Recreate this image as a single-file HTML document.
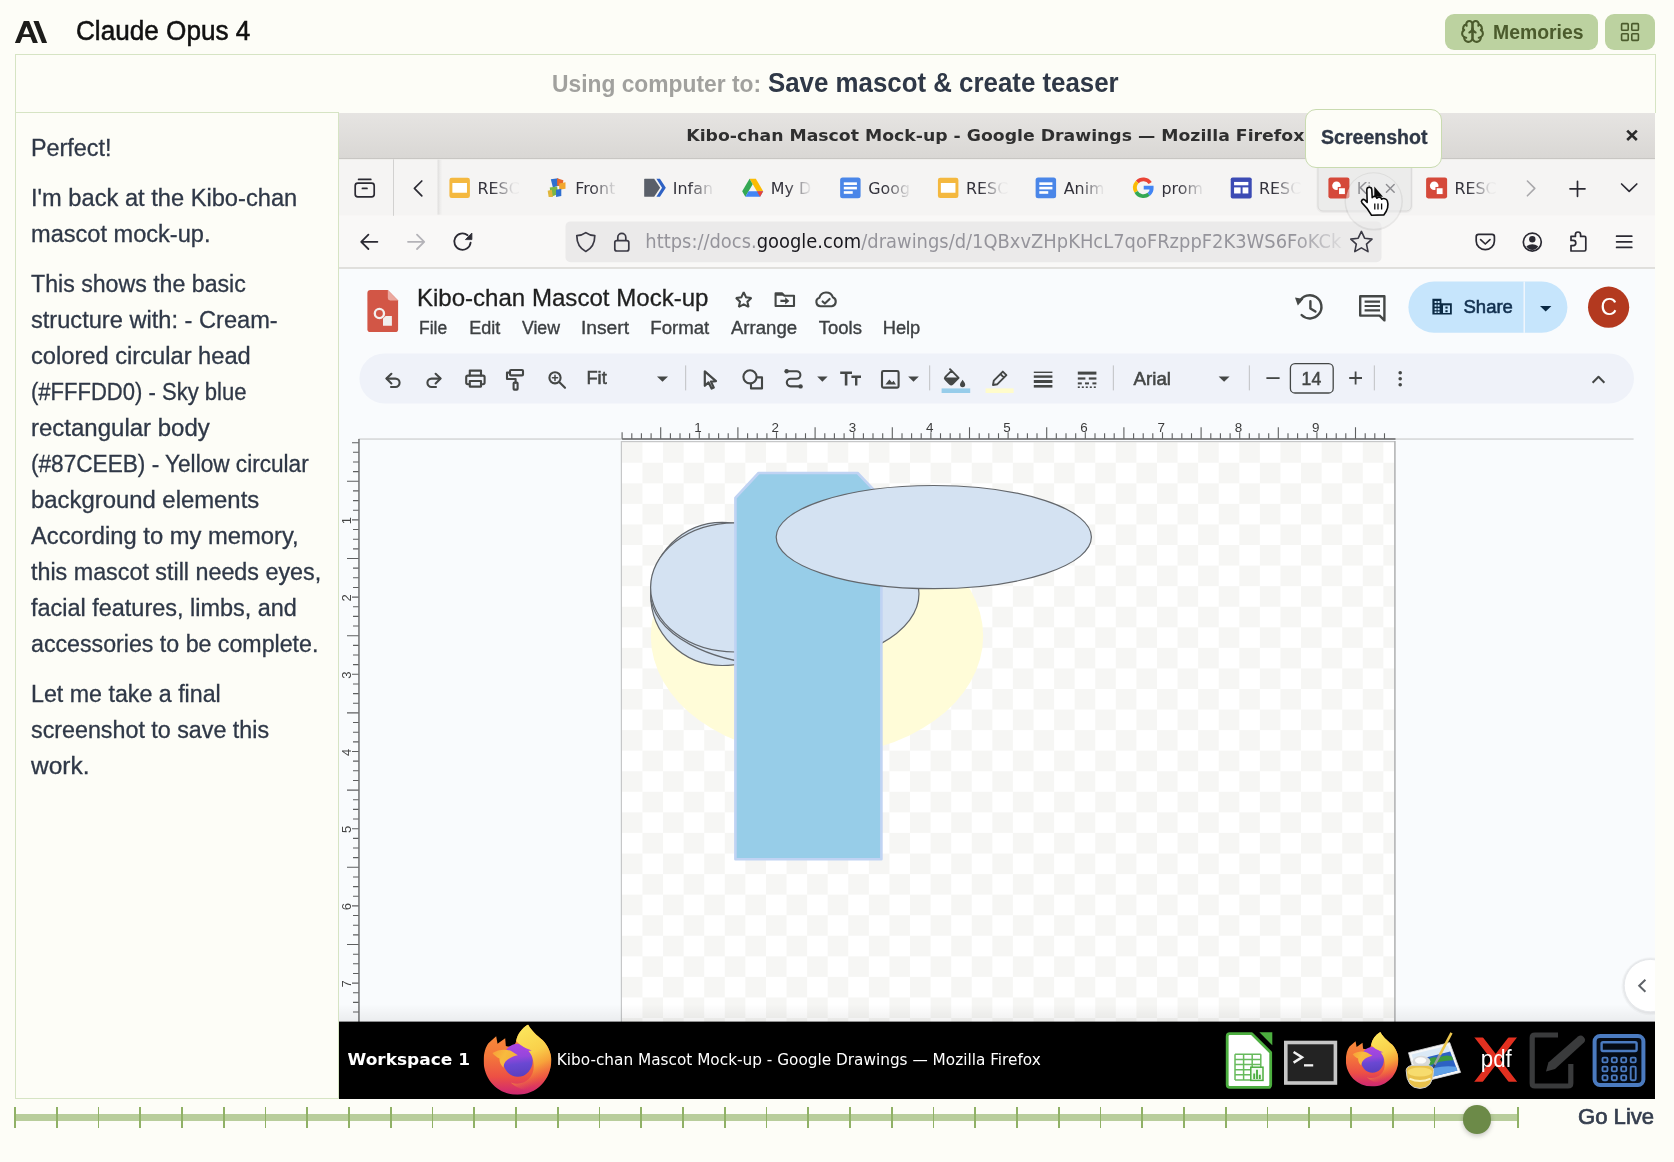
<!DOCTYPE html>
<html lang="en"><head><meta charset="utf-8"><title>Claude Opus 4 - Using computer</title>
<style>
*{margin:0;padding:0;box-sizing:border-box}
html,body{width:1674px;height:1162px;overflow:hidden;background:#fdfdf7}
#app{position:relative;width:1674px;height:1162px;overflow:hidden;background:#fdfdf7;will-change:transform;font-family:"Liberation Sans",sans-serif}
.t{position:absolute;white-space:nowrap;transform-origin:0 50%;display:block}
.b{position:absolute}
svg{position:absolute;display:block;overflow:hidden}
</style></head>
<body><div id="app">
<header>
<svg style="left:14px;top:21px" width="34" height="22" viewBox="-1 0 34 22"><path fill="#1d1d1b" fill-rule="evenodd" d="M-0.1 21.9 L8.8 0.1 L14.1 0.1 L22.9 21.9 L17.9 21.9 L15.45 15.9 L7.45 15.9 L5 21.9 Z M8.2 13.2 L14.7 13.2 L11.45 5.2 Z"/><path fill="#1d1d1b" d="M18.4 0.1 L23.6 0.1 L32.1 21.9 L27 21.9 Z"/></svg>
<span id="t1" class="t" style="left:75.6px;top:14.8px;font:400 27.0px/32px 'Liberation Sans', sans-serif;color:#111;transform:scaleX(0.9678);-webkit-text-stroke:0.55px #111;">Claude Opus 4</span>
<div class="b" style="left:1445.0px;top:14.0px;width:152.5px;height:35.5px;background:#bcd2a0;border-radius:9px"></div>
<svg style="left:1460px;top:18.9px" width="25" height="25" viewBox="0 0 24 24" fill="none" stroke="#4b5b2c" stroke-width="2" stroke-linecap="round" stroke-linejoin="round"><path d="M12 5a3 3 0 1 0-5.997.125 4 4 0 0 0-2.526 5.77 4 4 0 0 0 .556 6.588A4 4 0 1 0 12 18Z"/><path d="M12 5a3 3 0 1 1 5.997.125 4 4 0 0 1 2.526 5.77 4 4 0 0 1-.556 6.588A4 4 0 1 1 12 18Z"/><path d="M15 13a4.5 4.5 0 0 1-3-4 4.5 4.5 0 0 1-3 4"/><path d="M17.599 6.5a3 3 0 0 0 .399-1.375"/><path d="M6.003 5.125A3 3 0 0 0 6.401 6.5"/><path d="M3.477 10.896a4 4 0 0 1 .585-.396"/><path d="M19.938 10.5a4 4 0 0 1 .585.396"/><path d="M6 18a4 4 0 0 1-1.967-.516"/><path d="M19.967 17.484A4 4 0 0 1 18 18"/></svg>
<span id="t2" class="t" style="left:1492.9px;top:19.6px;font:700 19.6px/24px 'Liberation Sans', sans-serif;color:#4b5b2c;transform:scaleX(0.9890);">Memories</span>
<div class="b" style="left:1605.0px;top:14.0px;width:49.8px;height:35.5px;background:#bcd2a0;border-radius:9px"></div>
<svg style="left:1620px;top:22px" width="20" height="20" viewBox="0 0 20 20" fill="none" stroke="#4b5b2c" stroke-width="1.6" stroke-linejoin="round"><rect x="1.6" y="1.6" width="6.6" height="6.6" rx="0.8"/><rect x="11.8" y="1.6" width="6.6" height="6.6" rx="0.8"/><rect x="1.6" y="11.8" width="6.6" height="6.6" rx="0.8"/><rect x="11.8" y="11.8" width="6.6" height="6.6" rx="0.8"/></svg>
</header>
<main>
<div class="b" style="left:15.0px;top:54.0px;width:1641.0px;height:59.0px;border:1px solid #d6e4c4;border-bottom:none"></div>
<div class="b" style="left:15.0px;top:112.0px;width:324.0px;height:987.0px;border:1px solid #d6e4c4;background:#fdfdf7"></div>
<span id="t3" class="t" style="left:551.5px;top:68.6px;font:700 24.0px/29px 'Liberation Sans', sans-serif;color:#a1a19e;transform:scaleX(0.9500);">Using computer to:</span>
<span id="t4" class="t" style="left:767.5px;top:64.7px;font:700 28.5px/34px 'Liberation Sans', sans-serif;color:#2f3847;transform:scaleX(0.9070);">Save mascot &amp; create teaser</span>
<aside>
<p>
<span id="t5" class="t" style="left:30.8px;top:133.6px;font:400 23.0px/28px 'Liberation Sans', sans-serif;color:#2f3847;transform:scaleX(1.0152);-webkit-text-stroke:0.3px #2f3847;">Perfect!</span>
</p>
<p>
<span id="t6" class="t" style="left:30.8px;top:184.4px;font:400 23.0px/28px 'Liberation Sans', sans-serif;color:#2f3847;transform:scaleX(1.0286);-webkit-text-stroke:0.3px #2f3847;">I'm back at the Kibo-chan</span>
<span id="t7" class="t" style="left:30.8px;top:220.4px;font:400 23.0px/28px 'Liberation Sans', sans-serif;color:#2f3847;transform:scaleX(1.0251);-webkit-text-stroke:0.3px #2f3847;">mascot mock-up.</span>
</p>
<p>
<span id="t8" class="t" style="left:30.8px;top:270.4px;font:400 23.0px/28px 'Liberation Sans', sans-serif;color:#2f3847;transform:scaleX(1.0061);-webkit-text-stroke:0.3px #2f3847;">This shows the basic</span>
<span id="t9" class="t" style="left:30.8px;top:306.4px;font:400 23.0px/28px 'Liberation Sans', sans-serif;color:#2f3847;transform:scaleX(1.0267);-webkit-text-stroke:0.3px #2f3847;">structure with: - Cream-</span>
<span id="t10" class="t" style="left:30.8px;top:342.4px;font:400 23.0px/28px 'Liberation Sans', sans-serif;color:#2f3847;transform:scaleX(1.0294);-webkit-text-stroke:0.3px #2f3847;">colored circular head</span>
<span id="t11" class="t" style="left:30.8px;top:378.4px;font:400 23.0px/28px 'Liberation Sans', sans-serif;color:#2f3847;transform:scaleX(0.9578);-webkit-text-stroke:0.3px #2f3847;">(#FFFDD0) - Sky blue</span>
<span id="t12" class="t" style="left:30.8px;top:414.4px;font:400 23.0px/28px 'Liberation Sans', sans-serif;color:#2f3847;transform:scaleX(1.0433);-webkit-text-stroke:0.3px #2f3847;">rectangular body</span>
<span id="t13" class="t" style="left:30.8px;top:450.4px;font:400 23.0px/28px 'Liberation Sans', sans-serif;color:#2f3847;transform:scaleX(0.9830);-webkit-text-stroke:0.3px #2f3847;">(#87CEEB) - Yellow circular</span>
<span id="t14" class="t" style="left:30.8px;top:486.4px;font:400 23.0px/28px 'Liberation Sans', sans-serif;color:#2f3847;transform:scaleX(1.0377);-webkit-text-stroke:0.3px #2f3847;">background elements</span>
<span id="t15" class="t" style="left:30.8px;top:522.4px;font:400 23.0px/28px 'Liberation Sans', sans-serif;color:#2f3847;transform:scaleX(1.0332);-webkit-text-stroke:0.3px #2f3847;">According to my memory,</span>
<span id="t16" class="t" style="left:30.8px;top:558.4px;font:400 23.0px/28px 'Liberation Sans', sans-serif;color:#2f3847;transform:scaleX(1.0133);-webkit-text-stroke:0.3px #2f3847;">this mascot still needs eyes,</span>
<span id="t17" class="t" style="left:30.8px;top:594.4px;font:400 23.0px/28px 'Liberation Sans', sans-serif;color:#2f3847;transform:scaleX(1.0195);-webkit-text-stroke:0.3px #2f3847;">facial features, limbs, and</span>
<span id="t18" class="t" style="left:30.8px;top:630.4px;font:400 23.0px/28px 'Liberation Sans', sans-serif;color:#2f3847;transform:scaleX(1.0081);-webkit-text-stroke:0.3px #2f3847;">accessories to be complete.</span>
</p>
<p>
<span id="t19" class="t" style="left:30.8px;top:680.4px;font:400 23.0px/28px 'Liberation Sans', sans-serif;color:#2f3847;transform:scaleX(1.0096);-webkit-text-stroke:0.3px #2f3847;">Let me take a final</span>
<span id="t20" class="t" style="left:30.8px;top:716.4px;font:400 23.0px/28px 'Liberation Sans', sans-serif;color:#2f3847;transform:scaleX(1.0119);-webkit-text-stroke:0.3px #2f3847;">screenshot to save this</span>
<span id="t21" class="t" style="left:30.8px;top:752.4px;font:400 23.0px/28px 'Liberation Sans', sans-serif;color:#2f3847;transform:scaleX(1.0636);-webkit-text-stroke:0.3px #2f3847;">work.</span>
</p>
</aside>
<svg style="left:339px;top:113px" width="1316" height="986" viewBox="339 113 1316 986">
<defs>
<linearGradient id="gTitle" x1="0" y1="0" x2="0" y2="1"><stop offset="0" stop-color="#e6e4e2"/><stop offset="1" stop-color="#d9d7d4"/></linearGradient>
<linearGradient id="gFade" x1="0" y1="0" x2="1" y2="0"><stop offset="0" stop-color="#fff"/><stop offset="0.45" stop-color="#fff"/><stop offset="1" stop-color="#000"/></linearGradient>
<linearGradient id="gSep" x1="0" y1="0" x2="1" y2="0"><stop offset="0" stop-color="#dddcdb"/><stop offset="1" stop-color="#efeeed" stop-opacity="0.3"/></linearGradient>
<linearGradient id="gShadow" x1="0" y1="0" x2="0" y2="1"><stop offset="0" stop-color="#000" stop-opacity="0"/><stop offset="1" stop-color="#000" stop-opacity="0.06"/></linearGradient>
<pattern id="chk" x="621.9" y="442.2" width="41.16" height="41.13" patternUnits="userSpaceOnUse">
<rect width="41.2" height="41.2" fill="#ffffff"/><rect width="20.58" height="20.565" fill="#f6f6f4"/><rect x="20.58" y="20.565" width="20.6" height="20.6" fill="#f6f6f4"/></pattern>

<linearGradient id="ffBase" x1="0" y1="0" x2="0" y2="1"><stop offset="0" stop-color="#f8923a"/><stop offset="0.45" stop-color="#f4783a"/><stop offset="0.75" stop-color="#ec4f45"/><stop offset="0.93" stop-color="#d63068"/><stop offset="1" stop-color="#c92a72"/></linearGradient>
<linearGradient id="ffFlame" x1="0.3" y1="0" x2="0.6" y2="1"><stop offset="0" stop-color="#fbe85e"/><stop offset="0.45" stop-color="#f9d04a"/><stop offset="0.66" stop-color="#f7a83a" stop-opacity="0.92"/><stop offset="0.82" stop-color="#f58a3a" stop-opacity="0.35"/><stop offset="0.93" stop-color="#f47a3a" stop-opacity="0"/></linearGradient>
<linearGradient id="ffGlobe" x1="0.4" y1="0" x2="0.5" y2="1"><stop offset="0" stop-color="#ab47e2"/><stop offset="0.4" stop-color="#9646dc"/><stop offset="0.62" stop-color="#6a48d2"/><stop offset="1" stop-color="#5a3fc0"/></linearGradient>
<linearGradient id="ffHead" x1="0" y1="0" x2="1" y2="0.4"><stop offset="0" stop-color="#f79d38"/><stop offset="0.5" stop-color="#f8bb3e"/><stop offset="1" stop-color="#f6b03c"/></linearGradient>
<symbol id="ff" viewBox="0 0 100 104">
 <path fill="url(#ffBase)" d="M65.6 0 C72 12 84 20 88 24 C95 32 100 42 100 52 C100 82 78 104 50 104 C22 104 0 82 0 54 C0 42 3 33 7 27.7 L18.5 17.4 L20.5 28.7 L31.8 20.5 L32.8 31.8 C36 33 40 33 44 32 C46 30 47.4 27.6 48 24.6 C50 14 56 6 65.6 0 Z"/>
 <ellipse cx="50.5" cy="53" rx="22" ry="24.4" fill="url(#ffGlobe)"/>
 <path fill="url(#ffFlame)" d="M65.6 0 C72 12 84 20 88 24 C95 32 100 42 100 52 C100 70 92 86 78 95 C66 100 50 96 40 86 C56 92 74 82 74 62 C74 50 70 40 60 34 C56 31.4 52 29 48 24.6 C50 14 56 6 65.6 0 Z"/>
 <path fill="#a746e0" d="M58 33.4 L71 38.4 L62.6 39.6 Z"/>
 <path fill="url(#ffHead)" d="M13 42.4 C21 37 32 36 40 39 L50.6 45.4 C43.6 46.6 37.4 49.6 32.6 54.6 C30.4 57.6 29.4 60.6 29.4 64 C25.4 60 23 55 23.4 50.4 C19.4 48.6 15.6 45.8 13 42.4 Z"/>
</symbol>

</defs>
<rect x="339" y="268.6" width="1316" height="754" fill="#f9fbfd"/>
<path d="M370.6 289.9 H387.8 L398.1 300.4 V329.2 Q398.1 332.1 395.2 332.1 H370.6 Q367.4 332.1 367.4 329.2 V292.8 Q367.4 289.9 370.6 289.9 Z" fill="#d25646"/><path d="M387.8 289.9 L398.1 300.4 H390.2 Q387.8 300.4 387.8 298 Z" fill="#eba79e"/><circle cx="379.4" cy="313.5" r="4.6" fill="none" stroke="#f3efee" stroke-width="2.3"/><path d="M385.6 316 H391.9 V325.7 H383 V318.6 Z" fill="#f1eeed"/>
<text x="416.9" y="305.8" font-family="Liberation Sans, sans-serif" font-size="23.7" font-weight="400" fill="#1f1f1f" text-anchor="start" textLength="291.6" lengthAdjust="spacingAndGlyphs" stroke="#1f1f1f" stroke-width="0.3">Kibo-chan Mascot Mock-up</text>
<path d="M743.7 291.6 L746.4 297.4 L752.4 298.1 L747.9 302.3 L749.2 308.3 L743.7 305.3 L738.2 308.3 L739.5 302.3 L735 298.1 L741 297.4 Z" fill="none" stroke="#444746" stroke-width="2.3" stroke-linejoin="miter" stroke-miterlimit="2" transform="translate(743.7 300) scale(0.88) translate(-743.7 -300.4)"/>
<g fill="none" stroke="#444746" stroke-width="2.1" stroke-linejoin="round"><path d="M775.6 293.4 H782.2 L784.4 295.8 H794 V306 H775.6 Z"/></g><path d="M775.6 293.4 H782.2 L784.4 295.8 H775.6 Z" fill="#444746"/><path d="M780.4 299.8 H785.2 V297.2 L789.4 300.9 L785.2 304.6 V302 H780.4 Z" fill="#444746"/>
<g fill="none" stroke="#444746" stroke-width="2.1" stroke-linejoin="round" stroke-linecap="round"><path d="M820.6 306.2 H831.8 A4.7 4.7 0 0 0 832.8 297.2 A7 7 0 0 0 819.4 297.8 A4.3 4.3 0 0 0 820.6 306.2 Z"/><path d="M822.6 301.4 L824.9 303.6 L829.6 298.9"/></g>
<text x="419.0" y="333.6" font-family="Liberation Sans, sans-serif" font-size="18.0" font-weight="400" fill="#3d4043" text-anchor="start" textLength="28.1" lengthAdjust="spacingAndGlyphs" stroke="#3d4043" stroke-width="0.35">File</text>
<text x="469.2" y="333.6" font-family="Liberation Sans, sans-serif" font-size="18.0" font-weight="400" fill="#3d4043" text-anchor="start" textLength="31.1" lengthAdjust="spacingAndGlyphs" stroke="#3d4043" stroke-width="0.35">Edit</text>
<text x="521.9" y="333.6" font-family="Liberation Sans, sans-serif" font-size="18.0" font-weight="400" fill="#3d4043" text-anchor="start" textLength="38.1" lengthAdjust="spacingAndGlyphs" stroke="#3d4043" stroke-width="0.35">View</text>
<text x="580.9" y="333.6" font-family="Liberation Sans, sans-serif" font-size="18.0" font-weight="400" fill="#3d4043" text-anchor="start" textLength="48.1" lengthAdjust="spacingAndGlyphs" stroke="#3d4043" stroke-width="0.35">Insert</text>
<text x="650.3" y="333.6" font-family="Liberation Sans, sans-serif" font-size="18.0" font-weight="400" fill="#3d4043" text-anchor="start" textLength="59.0" lengthAdjust="spacingAndGlyphs" stroke="#3d4043" stroke-width="0.35">Format</text>
<text x="730.9" y="333.6" font-family="Liberation Sans, sans-serif" font-size="18.0" font-weight="400" fill="#3d4043" text-anchor="start" textLength="66.2" lengthAdjust="spacingAndGlyphs" stroke="#3d4043" stroke-width="0.35">Arrange</text>
<text x="818.7" y="333.6" font-family="Liberation Sans, sans-serif" font-size="18.0" font-weight="400" fill="#3d4043" text-anchor="start" textLength="43.2" lengthAdjust="spacingAndGlyphs" stroke="#3d4043" stroke-width="0.35">Tools</text>
<text x="882.7" y="333.6" font-family="Liberation Sans, sans-serif" font-size="18.0" font-weight="400" fill="#3d4043" text-anchor="start" textLength="37.6" lengthAdjust="spacingAndGlyphs" stroke="#3d4043" stroke-width="0.35">Help</text>
<g fill="none" stroke="#444746" stroke-width="2.4" stroke-linecap="round" stroke-linejoin="round"><path d="M1299.4 301.8 A11.6 11.6 0 1 1 1301.6 315"/><path d="M1310.4 301.2 V308.4 L1315.4 311.6"/></g><path d="M1295 297.4 L1303.4 299 L1297.8 305.6 Z" fill="#444746"/>
<path d="M1360.2 296.2 H1384.4 V320.4 L1379.6 315.6 H1360.2 Z" fill="none" stroke="#444746" stroke-width="2.4" stroke-linejoin="round"/><path d="M1364.6 301.6 H1380 M1364.6 306 H1380 M1364.6 310.4 H1380" stroke="#444746" stroke-width="2.2"/>
<rect x="1408.4" y="281.6" width="159" height="51.2" rx="25.6" fill="#c6e5fc"/>
<rect x="1523.6" y="281.6" width="1.2" height="51.2" fill="#f9fbfd"/>
<g fill="#0b2a44"><path d="M1432.4 298.8 H1441.4 V303.2 H1451.8 V314.6 H1432.4 Z"/></g><g fill="#c6e5fc"><rect x="1434.6" y="301" width="2" height="2"/><rect x="1437.6" y="301" width="2" height="2"/><rect x="1434.6" y="304.6" width="2" height="2"/><rect x="1437.6" y="304.6" width="2" height="2"/><rect x="1434.6" y="308.2" width="2" height="2"/><rect x="1437.6" y="308.2" width="2" height="2"/><rect x="1434.6" y="311.4" width="2" height="1.6"/><rect x="1437.6" y="311.4" width="2" height="1.6"/><rect x="1443" y="305.4" width="7" height="7.6"/></g><g fill="#0b2a44"><rect x="1445.4" y="306.6" width="2.2" height="2"/><rect x="1445.4" y="310.2" width="2.2" height="2"/></g>
<text x="1463.5" y="313.4" font-family="Liberation Sans, sans-serif" font-size="18.8" font-weight="400" fill="#12304f" text-anchor="start" textLength="49.4" lengthAdjust="spacingAndGlyphs" stroke="#12304f" stroke-width="0.6">Share</text>
<path d="M1540 306 H1551.4 L1545.7 311.6 Z" fill="#0b2a44"/>
<circle cx="1608.6" cy="307.2" r="20.6" fill="#b3391f"/>
<text x="1608.8" y="315.4" font-family="Liberation Sans, sans-serif" font-size="23.0" font-weight="400" fill="#fff" text-anchor="middle" >C</text>
<rect x="359.4" y="353.4" width="1274.6" height="50" rx="25" fill="#eff2f9"/>
<g fill="none" stroke="#444746" stroke-width="2.1" stroke-linecap="round" stroke-linejoin="round"><path d="M391.4 373.8 L386.4 378.6 L391.4 383.4"/><path d="M386.8 378.6 H395.4 A4.2 4.2 0 0 1 395.4 387 H391"/></g>
<g fill="none" stroke="#444746" stroke-width="2.1" stroke-linecap="round" stroke-linejoin="round"><path d="M435.6 373.8 L440.6 378.6 L435.6 383.4"/><path d="M440.2 378.6 H431.6 A4.2 4.2 0 0 0 431.6 387 H436"/></g>
<g fill="none" stroke="#444746" stroke-width="2.1" stroke-linecap="round" stroke-linejoin="round"><path d="M469.8 375.6 V370.6 H481 V375.6"/><rect x="466.2" y="375.6" width="18.4" height="8.6" rx="1.6"/><rect x="469.8" y="381" width="11.2" height="5.6" fill="#edf2fa"/></g>
<g fill="none" stroke="#444746" stroke-width="2.1" stroke-linecap="round" stroke-linejoin="round"><rect x="510" y="370" width="13" height="5.4" rx="1"/><path d="M510 372.6 H507 V379 H515.6 V382.6"/><rect x="513.6" y="382.6" width="4" height="7" rx="0.8"/></g>
<g fill="none" stroke="#444746" stroke-width="2.1" stroke-linecap="round" stroke-linejoin="round"><circle cx="555" cy="377.8" r="5.6"/><path d="M559.2 382 L565 387.8"/><path d="M552.4 377.8 H557.6 M555 375.2 V380.4" stroke-width="1.5"/></g>
<text x="586.4" y="384.0" font-family="Liberation Sans, sans-serif" font-size="18.0" font-weight="400" fill="#444746" text-anchor="start" textLength="20.4" lengthAdjust="spacingAndGlyphs" stroke="#444746" stroke-width="0.55">Fit</text>
<path d="M657.0 376.4 H668.0 L662.5 381.8 Z" fill="#444746"/>
<rect x="685" y="365.4" width="1.2" height="25" fill="#c7c9cc"/>
<path d="M704.8 371.4 L704.8 385.8 L708.6 382.4 L711.6 388.6 L713.8 387.6 L711 381.6 L716 381.2 Z" fill="none" stroke="#444746" stroke-width="2.2" stroke-linejoin="round"/>
<g fill="none" stroke="#444746" stroke-width="2.1" stroke-linecap="round" stroke-linejoin="round"><circle cx="750" cy="376.8" r="6.6"/><path d="M757.6 377.4 H762 V388.4 H751 V384.4"/></g>
<g fill="none" stroke="#444746" stroke-width="2.1" stroke-linecap="round" stroke-linejoin="round" stroke-width="2.2"><path d="M788.4 371.2 H796.6 A3.8 3.8 0 0 1 796.6 378.8 H790.6 A3.8 3.8 0 0 0 790.6 386.4 H798.8"/></g><circle cx="786.6" cy="371.2" r="2.2" fill="#444746"/><circle cx="800.6" cy="386.4" r="2.2" fill="#444746"/>
<path d="M817.2 376.4 H827.6 L822.4 381.8 Z" fill="#444746"/>
<path d="M840.2 371.4 H852 V374 H847.4 V385.4 H844.8 V374 H840.2 Z M851.4 375.6 H861 V378 H857.4 V385.4 H855 V378 H851.4 Z" fill="#444746"/>
<g fill="none" stroke="#444746" stroke-width="2.1" stroke-linecap="round" stroke-linejoin="round"><rect x="882" y="371" width="16.6" height="16.6" rx="1.4"/></g><path d="M885.4 384.4 L889.4 379.4 L892 382.6 L893.6 380.8 L896 384.4 Z" fill="#444746"/>
<path d="M908.2 376.4 H918.8 L913.5 381.8 Z" fill="#444746"/>
<rect x="929" y="365.4" width="1.2" height="25" fill="#c7c9cc"/>
<path d="M950 369.2 L958.6 377.8 L952.6 383.8 Q951.2 385 949.8 383.8 L945.4 379.4 Q944.2 378 945.4 376.8 L951.4 370.8 M946 378.4 H957.4" fill="none" stroke="#444746" stroke-width="1.9" stroke-linejoin="round" stroke-linecap="round"/><path d="M949 378.6 H957.4 L952.4 383.6 Q951.2 384.6 950 383.6 L946 379.6 Z" fill="#444746"/><path d="M962.6 379.8 Q965.2 383.2 965.2 384.6 A2.6 2.6 0 0 1 960 384.6 Q960 383.2 962.6 379.8 Z" fill="#444746"/>
<rect x="941.6" y="388.4" width="28.6" height="4.6" fill="#97cdea"/>
<path d="M993 385 L993.8 380.6 L1002.8 371.6 L1006.4 375.2 L997.4 384.2 Z M1000.4 374 L1004 377.6" fill="none" stroke="#444746" stroke-width="1.9" stroke-linejoin="round"/>
<rect x="985.6" y="388.4" width="28" height="4.6" fill="#fffccb"/>
<g fill="#444746"><rect x="1033.8" y="371.6" width="18.6" height="1.4"/><rect x="1033.8" y="375.4" width="18.6" height="2.4"/><rect x="1033.8" y="380" width="18.6" height="3"/><rect x="1033.8" y="385" width="18.6" height="2.6"/></g>
<g fill="#444746"><rect x="1077.8" y="371.6" width="18.6" height="3"/><rect x="1077.8" y="377.4" width="7.6" height="2.2"/><rect x="1088.8" y="377.4" width="7.6" height="2.2"/><rect x="1077.8" y="382.4" width="4" height="2"/><rect x="1085" y="382.4" width="4" height="2"/><rect x="1092.4" y="382.4" width="4" height="2"/><rect x="1077.8" y="386.4" width="2" height="1.6"/><rect x="1081.8" y="386.4" width="2" height="1.6"/><rect x="1085.8" y="386.4" width="2" height="1.6"/><rect x="1089.8" y="386.4" width="2" height="1.6"/><rect x="1093.8" y="386.4" width="2" height="1.6"/></g>
<rect x="1112.8" y="365.4" width="1.2" height="25" fill="#c7c9cc"/>
<text x="1133.6" y="384.8" font-family="Liberation Sans, sans-serif" font-size="18.0" font-weight="400" fill="#444746" text-anchor="start" textLength="37.4" lengthAdjust="spacingAndGlyphs" stroke="#444746" stroke-width="0.55">Arial</text>
<path d="M1218.6 376.4 H1229.6 L1224.1 381.8 Z" fill="#444746"/>
<rect x="1248.8" y="365.4" width="1.2" height="25" fill="#c7c9cc"/>
<rect x="1266.4" y="377.2" width="13.2" height="1.8" fill="#444746"/>
<rect x="1290.4" y="363.6" width="42.8" height="29.4" rx="4.6" fill="none" stroke="#444746" stroke-width="1.3"/>
<text x="1311.4" y="384.6" font-family="Liberation Sans, sans-serif" font-size="17.6" font-weight="400" fill="#444746" text-anchor="middle" stroke="#444746" stroke-width="0.5">14</text>
<path d="M1349.2 378 H1362 M1355.6 371.6 V384.4" stroke="#444746" stroke-width="1.8"/>
<rect x="1373.8" y="365.4" width="1.2" height="25" fill="#c7c9cc"/>
<g fill="#444746"><circle cx="1400.2" cy="372.8" r="1.8"/><circle cx="1400.2" cy="378.8" r="1.8"/><circle cx="1400.2" cy="384.8" r="1.8"/></g>
<path d="M1592.6 382.8 L1598.5 376.8 L1604.4 382.8" fill="none" stroke="#444746" stroke-width="2" stroke-linejoin="round"/>
<rect x="358.6" y="438.4" width="1275" height="1.3" fill="#cfd0d1"/>
<rect x="622.1" y="438.2" width="773.4" height="1.6" fill="#707172"/>
<path d="M622.1 438.8 V432.2 M631.8 438.8 V433.2 M641.4 438.8 V433.2 M651.1 438.8 V433.2 M660.7 438.8 V427.2 M670.4 438.8 V433.2 M680.0 438.8 V433.2 M689.6 438.8 V433.2 M699.3 438.8 V432.2 M709.0 438.8 V433.2 M718.6 438.8 V433.2 M728.2 438.8 V433.2 M737.9 438.8 V427.2 M747.6 438.8 V433.2 M757.2 438.8 V433.2 M766.9 438.8 V433.2 M776.5 438.8 V432.2 M786.2 438.8 V433.2 M795.8 438.8 V433.2 M805.5 438.8 V433.2 M815.1 438.8 V427.2 M824.8 438.8 V433.2 M834.4 438.8 V433.2 M844.1 438.8 V433.2 M853.7 438.8 V432.2 M863.4 438.8 V433.2 M873.0 438.8 V433.2 M882.7 438.8 V433.2 M892.3 438.8 V427.2 M902.0 438.8 V433.2 M911.6 438.8 V433.2 M921.2 438.8 V433.2 M930.9 438.8 V432.2 M940.5 438.8 V433.2 M950.2 438.8 V433.2 M959.9 438.8 V433.2 M969.5 438.8 V427.2 M979.2 438.8 V433.2 M988.8 438.8 V433.2 M998.5 438.8 V433.2 M1008.1 438.8 V432.2 M1017.8 438.8 V433.2 M1027.4 438.8 V433.2 M1037.0 438.8 V433.2 M1046.7 438.8 V427.2 M1056.3 438.8 V433.2 M1066.0 438.8 V433.2 M1075.7 438.8 V433.2 M1085.3 438.8 V432.2 M1095.0 438.8 V433.2 M1104.6 438.8 V433.2 M1114.2 438.8 V433.2 M1123.9 438.8 V427.2 M1133.6 438.8 V433.2 M1143.2 438.8 V433.2 M1152.8 438.8 V433.2 M1162.5 438.8 V432.2 M1172.2 438.8 V433.2 M1181.8 438.8 V433.2 M1191.5 438.8 V433.2 M1201.1 438.8 V427.2 M1210.8 438.8 V433.2 M1220.4 438.8 V433.2 M1230.1 438.8 V433.2 M1239.7 438.8 V432.2 M1249.3 438.8 V433.2 M1259.0 438.8 V433.2 M1268.7 438.8 V433.2 M1278.3 438.8 V427.2 M1288.0 438.8 V433.2 M1297.6 438.8 V433.2 M1307.2 438.8 V433.2 M1316.9 438.8 V432.2 M1326.6 438.8 V433.2 M1336.2 438.8 V433.2 M1345.8 438.8 V433.2 M1355.5 438.8 V427.2 M1365.2 438.8 V433.2 M1374.8 438.8 V433.2 M1384.5 438.8 V433.2 " stroke="#5e5f60" stroke-width="1.1" fill="none"/>
<text x="698.1" y="431.5" font-family="Liberation Sans, sans-serif" font-size="13.4" font-weight="400" fill="#3c3c3c" text-anchor="middle" >1</text>
<text x="775.3" y="431.5" font-family="Liberation Sans, sans-serif" font-size="13.4" font-weight="400" fill="#3c3c3c" text-anchor="middle" >2</text>
<text x="852.5" y="431.5" font-family="Liberation Sans, sans-serif" font-size="13.4" font-weight="400" fill="#3c3c3c" text-anchor="middle" >3</text>
<text x="929.7" y="431.5" font-family="Liberation Sans, sans-serif" font-size="13.4" font-weight="400" fill="#3c3c3c" text-anchor="middle" >4</text>
<text x="1006.9" y="431.5" font-family="Liberation Sans, sans-serif" font-size="13.4" font-weight="400" fill="#3c3c3c" text-anchor="middle" >5</text>
<text x="1084.1" y="431.5" font-family="Liberation Sans, sans-serif" font-size="13.4" font-weight="400" fill="#3c3c3c" text-anchor="middle" >6</text>
<text x="1161.3" y="431.5" font-family="Liberation Sans, sans-serif" font-size="13.4" font-weight="400" fill="#3c3c3c" text-anchor="middle" >7</text>
<text x="1238.5" y="431.5" font-family="Liberation Sans, sans-serif" font-size="13.4" font-weight="400" fill="#3c3c3c" text-anchor="middle" >8</text>
<text x="1315.7" y="431.5" font-family="Liberation Sans, sans-serif" font-size="13.4" font-weight="400" fill="#3c3c3c" text-anchor="middle" >9</text>
<rect x="358.2" y="439" width="1.5" height="583" fill="#707172"/>
<path d="M358.6 442.7 H352.0 M358.6 452.3 H353.0 M358.6 462.0 H353.0 M358.6 471.6 H353.0 M358.6 481.3 H347.0 M358.6 490.9 H353.0 M358.6 500.6 H353.0 M358.6 510.2 H353.0 M358.6 519.9 H352.0 M358.6 529.5 H353.0 M358.6 539.2 H353.0 M358.6 548.9 H353.0 M358.6 558.5 H347.0 M358.6 568.1 H353.0 M358.6 577.8 H353.0 M358.6 587.5 H353.0 M358.6 597.1 H352.0 M358.6 606.8 H353.0 M358.6 616.4 H353.0 M358.6 626.0 H353.0 M358.6 635.7 H347.0 M358.6 645.4 H353.0 M358.6 655.0 H353.0 M358.6 664.6 H353.0 M358.6 674.3 H352.0 M358.6 684.0 H353.0 M358.6 693.6 H353.0 M358.6 703.2 H353.0 M358.6 712.9 H347.0 M358.6 722.5 H353.0 M358.6 732.2 H353.0 M358.6 741.9 H353.0 M358.6 751.5 H352.0 M358.6 761.1 H353.0 M358.6 770.8 H353.0 M358.6 780.5 H353.0 M358.6 790.1 H347.0 M358.6 799.8 H353.0 M358.6 809.4 H353.0 M358.6 819.0 H353.0 M358.6 828.7 H352.0 M358.6 838.4 H353.0 M358.6 848.0 H353.0 M358.6 857.6 H353.0 M358.6 867.3 H347.0 M358.6 877.0 H353.0 M358.6 886.6 H353.0 M358.6 896.2 H353.0 M358.6 905.9 H352.0 M358.6 915.5 H353.0 M358.6 925.2 H353.0 M358.6 934.9 H353.0 M358.6 944.5 H347.0 M358.6 954.2 H353.0 M358.6 963.8 H353.0 M358.6 973.5 H353.0 M358.6 983.1 H352.0 M358.6 992.8 H353.0 M358.6 1002.4 H353.0 M358.6 1012.0 H353.0 " stroke="#5e5f60" stroke-width="1.1" fill="none"/>
<text transform="translate(351.0 520.7) rotate(-90)" font-family="Liberation Sans, sans-serif" font-size="13" fill="#444" text-anchor="middle">1</text>
<text transform="translate(351.0 597.9) rotate(-90)" font-family="Liberation Sans, sans-serif" font-size="13" fill="#444" text-anchor="middle">2</text>
<text transform="translate(351.0 675.1) rotate(-90)" font-family="Liberation Sans, sans-serif" font-size="13" fill="#444" text-anchor="middle">3</text>
<text transform="translate(351.0 752.3) rotate(-90)" font-family="Liberation Sans, sans-serif" font-size="13" fill="#444" text-anchor="middle">4</text>
<text transform="translate(351.0 829.5) rotate(-90)" font-family="Liberation Sans, sans-serif" font-size="13" fill="#444" text-anchor="middle">5</text>
<text transform="translate(351.0 906.7) rotate(-90)" font-family="Liberation Sans, sans-serif" font-size="13" fill="#444" text-anchor="middle">6</text>
<text transform="translate(351.0 983.9) rotate(-90)" font-family="Liberation Sans, sans-serif" font-size="13" fill="#444" text-anchor="middle">7</text>
<rect x="621.4" y="441.6" width="773.6" height="581" fill="url(#chk)" stroke="#c6c7c8" stroke-width="1.2"/><rect x="1394.3" y="441" width="1.1" height="581" fill="#adaeaf"/>
<ellipse cx="817" cy="636" rx="166.2" ry="119.6" fill="#fffcd8"/>
<ellipse cx="722.2" cy="593.9" rx="71.6" ry="71.6" fill="#d4e2f2" stroke="#63676c" stroke-width="1.2"/>
<ellipse cx="784.8" cy="593.8" rx="134.2" ry="71.5" fill="#d4e2f2" stroke="#63676c" stroke-width="1.2"/>
<ellipse cx="735" cy="587.4" rx="84.4" ry="64.6" fill="#d4e2f2" stroke="#63676c" stroke-width="1.2"/>
<path d="M758.6 473 H857.6 L881.4 497.8 V859.2 H735.4 V497.8 Z" fill="#97cde8" stroke="#c0d3f3" stroke-width="2.6" stroke-linejoin="round"/>
<ellipse cx="933.8" cy="537.1" rx="157.6" ry="51.6" fill="#d4e2f2" stroke="#63676c" stroke-width="1.2"/>
<rect x="339" y="1004" width="1316" height="18" fill="url(#gShadow)"/>
<circle cx="1650.4" cy="986.2" r="29" fill="#3c4043" fill-opacity="0.035"/><circle cx="1650.4" cy="986" r="27.8" fill="#3c4043" fill-opacity="0.05"/><circle cx="1650.4" cy="985.6" r="26.2" fill="#fff" stroke="#e6e8eb" stroke-width="1"/><path d="M1645.4 979.8 L1639.2 985.8 L1645.4 991.8" fill="none" stroke="#5f6368" stroke-width="2" stroke-linejoin="miter"/>
<rect x="339" y="113" width="1316" height="46" fill="url(#gTitle)"/>
<rect x="339" y="158.4" width="1316" height="1" fill="#bdbbb8"/>
<text x="686.3" y="141.4" font-family="DejaVu Sans, Liberation Sans, sans-serif" font-size="15.4" font-weight="700" fill="#2f2f2f" text-anchor="start" textLength="618.0" lengthAdjust="spacingAndGlyphs" >Kibo-chan Mascot Mock-up - Google Drawings — Mozilla Firefox</text>
<path d="M1627.2 130.6 L1636.8 140 M1636.8 130.6 L1627.2 140" stroke="#2a2a2a" stroke-width="2.6" stroke-linecap="butt"/>
<rect x="339" y="159.3" width="1316" height="56.5" fill="#f5f4f3"/>
<rect x="339" y="215.6" width="1316" height="52" fill="#f9f8f7"/>
<rect x="339" y="267.4" width="1316" height="1.2" fill="#cfcecb"/>
<g fill="none" stroke="#2b2a33" stroke-width="1.7" stroke-linecap="round" stroke-linejoin="round"><rect x="355.2" y="183.2" width="19" height="13.6" rx="2.6"/><path d="M358.6 179.4 H370.8"/><path d="M362.4 188.4 H367"/></g>
<rect x="393" y="159.3" width="1" height="56.5" fill="#d2d1d0"/>
<rect x="437.6" y="159.6" width="4.4" height="55" fill="url(#gSep)"/>
<path d="M421.8 181 L414.4 188.4 L421.8 195.8" fill="none" stroke="#2b2a33" stroke-width="1.7" stroke-linecap="round" stroke-linejoin="round"/>
<rect x="1316.4" y="161" width="96.4" height="52" rx="6.5" fill="#000" fill-opacity="0.035"/><rect x="1318" y="162" width="93.3" height="49" rx="5" fill="#ececeb" stroke="#d9d8d7" stroke-width="1"/>
<g transform="translate(448.9 177.1) scale(1.05)"><rect x="0.5" y="0.5" width="19.5" height="19.5" rx="2.2" fill="#f4b83f"/><rect x="3.3" y="5.6" width="13.9" height="9.3" fill="#fff"/></g>
<text x="477.5" y="194.1" font-family="DejaVu Sans, Liberation Sans, sans-serif" font-size="15.9" fill="url(#tf0)">RESC</text>
<linearGradient id="tf0" gradientUnits="userSpaceOnUse" x1="477.5" y1="0" x2="513.5" y2="0"><stop offset="0" stop-color="#33323b"/><stop offset="0.4" stop-color="#33323b"/><stop offset="1" stop-color="#33323b" stop-opacity="0.05"/></linearGradient>
<g transform="translate(546.6 177.1) scale(1.05)"><path d="M4 2 L11 1 L12 8 L6 10 Z" fill="#2f6fd0"/><path d="M10 1 L16 3 L15 9 L10 8 Z" fill="#e8662a"/><path d="M12 6 L18 5 L18 11 L12 12 Z" fill="#f2a72e"/><path d="M3 10 L10 9 L11 16 L4 19 Z" fill="#7ab648"/><path d="M9 12 L14 11 L14 18 L9 19 Z" fill="#2f6fd0"/><path d="M1 13 L5 12 L6 19 L2 19 Z" fill="#e0b63a"/></g>
<text x="575.2" y="194.1" font-family="DejaVu Sans, Liberation Sans, sans-serif" font-size="15.9" fill="url(#tf1)">Front</text>
<linearGradient id="tf1" gradientUnits="userSpaceOnUse" x1="575.2" y1="0" x2="616.2" y2="0"><stop offset="0" stop-color="#33323b"/><stop offset="0.4" stop-color="#33323b"/><stop offset="1" stop-color="#33323b" stop-opacity="0.05"/></linearGradient>
<g transform="translate(644.2 177.1) scale(1.05)"><path d="M0.5 1.6 L9.5 1.6 L15.2 10.2 L9.5 18.8 L0.5 18.8 Q0 18.8 0 18 L0 2.4 Q0 1.6 0.5 1.6 Z" fill="#5a5f69"/><path d="M11.6 1.6 L15 1.6 L20.6 10.2 L15 18.8 L11.6 18.8 L17 10.2 Z" fill="#2f62c4"/></g>
<text x="672.8" y="194.1" font-family="DejaVu Sans, Liberation Sans, sans-serif" font-size="15.9" fill="url(#tf2)">Infan</text>
<linearGradient id="tf2" gradientUnits="userSpaceOnUse" x1="672.8" y1="0" x2="713.8" y2="0"><stop offset="0" stop-color="#33323b"/><stop offset="0.4" stop-color="#33323b"/><stop offset="1" stop-color="#33323b" stop-opacity="0.05"/></linearGradient>
<g transform="translate(742.2 177.1) scale(1.05)"><path d="M7 1.5 L13 1.5 L20 13.5 L14 13.5 Z" fill="#fbbc04"/><path d="M7 1.5 L0 13.5 L3 18.8 L10 6.7 Z" fill="#34a853"/><path d="M3 18.8 L17 18.8 L20 13.5 L6 13.5 Z" fill="#4285f4"/><path d="M14 13.5 L20 13.5 L17 18.8 Z" fill="#ea4335"/></g>
<text x="770.8" y="194.1" font-family="DejaVu Sans, Liberation Sans, sans-serif" font-size="15.9" fill="url(#tf3)">My D</text>
<linearGradient id="tf3" gradientUnits="userSpaceOnUse" x1="770.8" y1="0" x2="810.8" y2="0"><stop offset="0" stop-color="#33323b"/><stop offset="0.4" stop-color="#33323b"/><stop offset="1" stop-color="#33323b" stop-opacity="0.05"/></linearGradient>
<g transform="translate(839.6 177.1) scale(1.05)"><rect x="0.5" y="0.3" width="19.5" height="19.8" rx="2.4" fill="#4a86e8"/><rect x="4" y="5" width="12.5" height="2.5" fill="#fff"/><rect x="4" y="9.2" width="12.5" height="2.5" fill="#fff"/><rect x="4" y="13.4" width="8.5" height="2.5" fill="#fff"/></g>
<text x="868.2" y="194.1" font-family="DejaVu Sans, Liberation Sans, sans-serif" font-size="15.9" fill="url(#tf4)">Goog</text>
<linearGradient id="tf4" gradientUnits="userSpaceOnUse" x1="868.2" y1="0" x2="910.2" y2="0"><stop offset="0" stop-color="#33323b"/><stop offset="0.4" stop-color="#33323b"/><stop offset="1" stop-color="#33323b" stop-opacity="0.05"/></linearGradient>
<g transform="translate(937.4 177.1) scale(1.05)"><rect x="0.5" y="0.5" width="19.5" height="19.5" rx="2.2" fill="#f4b83f"/><rect x="3.3" y="5.6" width="13.9" height="9.3" fill="#fff"/></g>
<text x="966.0" y="194.1" font-family="DejaVu Sans, Liberation Sans, sans-serif" font-size="15.9" fill="url(#tf5)">RESC</text>
<linearGradient id="tf5" gradientUnits="userSpaceOnUse" x1="966.0" y1="0" x2="1002.0" y2="0"><stop offset="0" stop-color="#33323b"/><stop offset="0.4" stop-color="#33323b"/><stop offset="1" stop-color="#33323b" stop-opacity="0.05"/></linearGradient>
<g transform="translate(1035.1 177.1) scale(1.05)"><rect x="0.5" y="0.3" width="19.5" height="19.8" rx="2.4" fill="#4a86e8"/><rect x="4" y="5" width="12.5" height="2.5" fill="#fff"/><rect x="4" y="9.2" width="12.5" height="2.5" fill="#fff"/><rect x="4" y="13.4" width="8.5" height="2.5" fill="#fff"/></g>
<text x="1063.7" y="194.1" font-family="DejaVu Sans, Liberation Sans, sans-serif" font-size="15.9" fill="url(#tf6)">Anim</text>
<linearGradient id="tf6" gradientUnits="userSpaceOnUse" x1="1063.7" y1="0" x2="1103.7" y2="0"><stop offset="0" stop-color="#33323b"/><stop offset="0.4" stop-color="#33323b"/><stop offset="1" stop-color="#33323b" stop-opacity="0.05"/></linearGradient>
<g transform="translate(1132.8 177.1) scale(1.05)" fill="none" stroke-width="3.6"><path d="M16.6 5.6 A8 8 0 0 0 4.2 4.6" stroke="#ea4335"/><path d="M4.2 4.6 A8 8 0 0 0 3.2 14" stroke="#fbbc04"/><path d="M3.2 14 A8 8 0 0 0 15.2 16.4" stroke="#34a853"/><path d="M15.2 16.4 A8 8 0 0 0 18 10 L10.4 10" stroke="#4285f4"/></g>
<text x="1161.4" y="194.1" font-family="DejaVu Sans, Liberation Sans, sans-serif" font-size="15.9" fill="url(#tf7)">prom</text>
<linearGradient id="tf7" gradientUnits="userSpaceOnUse" x1="1161.4" y1="0" x2="1203.4" y2="0"><stop offset="0" stop-color="#33323b"/><stop offset="0.4" stop-color="#33323b"/><stop offset="1" stop-color="#33323b" stop-opacity="0.05"/></linearGradient>
<g transform="translate(1230.4 177.1) scale(1.05)"><rect x="0.3" y="0.3" width="20" height="20" rx="1.8" fill="#3c4bb4"/><rect x="3.5" y="4.6" width="13.6" height="3.2" fill="#fff"/><rect x="3.5" y="9.8" width="6.2" height="5.8" fill="#fff"/><rect x="11.6" y="9.8" width="5.5" height="5.8" fill="#fff"/></g>
<text x="1259.0" y="194.1" font-family="DejaVu Sans, Liberation Sans, sans-serif" font-size="15.9" fill="url(#tf8)">RESC</text>
<linearGradient id="tf8" gradientUnits="userSpaceOnUse" x1="1259.0" y1="0" x2="1295.0" y2="0"><stop offset="0" stop-color="#33323b"/><stop offset="0.4" stop-color="#33323b"/><stop offset="1" stop-color="#33323b" stop-opacity="0.05"/></linearGradient>
<g transform="translate(1328.1 177.1) scale(1.05)"><rect x="0.3" y="0.3" width="20" height="20" rx="2" fill="#d5493a"/><circle cx="8" cy="8.2" r="4.1" fill="#fff"/><rect x="9.8" y="10" width="6.8" height="6.8" fill="#fff" stroke="#d5493a" stroke-width="1.2"/></g>
<text x="1356.7" y="194.1" font-family="DejaVu Sans, Liberation Sans, sans-serif" font-size="15.9" fill="url(#tf9)">Ki</text>
<linearGradient id="tf9" gradientUnits="userSpaceOnUse" x1="1356.7" y1="0" x2="1378.7" y2="0"><stop offset="0" stop-color="#33323b"/><stop offset="0.4" stop-color="#33323b"/><stop offset="1" stop-color="#33323b" stop-opacity="0.05"/></linearGradient>
<g transform="translate(1425.8 177.1) scale(1.05)"><rect x="0.3" y="0.3" width="20" height="20" rx="2" fill="#d5493a"/><circle cx="8" cy="8.2" r="4.1" fill="#fff"/><rect x="9.8" y="10" width="6.8" height="6.8" fill="#fff" stroke="#d5493a" stroke-width="1.2"/></g>
<text x="1454.4" y="194.1" font-family="DejaVu Sans, Liberation Sans, sans-serif" font-size="15.9" fill="url(#tf10)">RESC</text>
<linearGradient id="tf10" gradientUnits="userSpaceOnUse" x1="1454.4" y1="0" x2="1490.4" y2="0"><stop offset="0" stop-color="#33323b"/><stop offset="0.4" stop-color="#33323b"/><stop offset="1" stop-color="#33323b" stop-opacity="0.05"/></linearGradient>
<path d="M1386.4 184.4 L1394.2 192.2 M1394.2 184.4 L1386.4 192.2" stroke="#2b2a33" stroke-width="1.4" stroke-linecap="round"/>
<path d="M1527.4 181 L1534.8 188.4 L1527.4 195.8" fill="none" stroke="#a9a8ab" stroke-width="1.6" stroke-linecap="round" stroke-linejoin="round"/>
<path d="M1570 188.8 H1585 M1577.5 181.3 V196.3" stroke="#2b2a33" stroke-width="1.7" stroke-linecap="round"/>
<path d="M1621.6 184 L1629.2 191.4 L1636.8 184" fill="none" stroke="#2b2a33" stroke-width="1.7" stroke-linecap="round" stroke-linejoin="round"/>
<path d="M377.4 241.8 H361.6 M368.4 234.6 L361.2 241.8 L368.4 249" fill="none" stroke="#2b2a33" stroke-width="1.8" stroke-linecap="round" stroke-linejoin="round"/>
<path d="M408 241.8 H423.8 M417 234.6 L424.2 241.8 L417 249" fill="none" stroke="#b4b3b8" stroke-width="1.8" stroke-linecap="round" stroke-linejoin="round"/>
<g fill="none" stroke="#2b2a33" stroke-width="1.8" stroke-linecap="round" stroke-linejoin="round"><path d="M470.6 242.6 A8.2 8.2 0 1 1 467.6 235.2"/></g><path d="M471.9 233 V239.6 H465.4 Z" fill="#2b2a33" stroke="#2b2a33" stroke-width="0.8" stroke-linejoin="round"/>
<rect x="565.5" y="221.4" width="816" height="40.8" rx="5" fill="#ebeaea"/>
<path d="M585.8 232.6 C589 235 592.4 235.6 594.8 235.6 C594.8 243.6 591.8 248.6 585.8 251.4 C579.8 248.6 576.8 243.6 576.8 235.6 C579.2 235.6 582.6 235 585.8 232.6 Z" fill="none" stroke="#3a3944" stroke-width="1.7" stroke-linejoin="round"/>
<g fill="none" stroke="#3a3944" stroke-width="1.7" stroke-linejoin="round"><rect x="614.8" y="240.6" width="14" height="10.4" rx="2"/><path d="M617.8 240.4 V237.4 A4 4 0 0 1 625.8 237.4 V240.4"/></g>
<text x="645.3" y="248.4" font-family="DejaVu Sans, Liberation Sans, sans-serif" font-size="18.6" textLength="696" lengthAdjust="spacingAndGlyphs"><tspan fill="#95949b">https://docs.</tspan><tspan fill="#18171d">google.com</tspan><tspan fill="url(#urlFade)">/drawings/d/1QBxvZHpKHcL7qoFRzppF2K3WS6FoKCk</tspan></text>
<linearGradient id="urlFade" gradientUnits="userSpaceOnUse" x1="861" y1="0" x2="1342" y2="0"><stop offset="0" stop-color="#95949b"/><stop offset="0.9" stop-color="#95949b"/><stop offset="1" stop-color="#95949b" stop-opacity="0.15"/></linearGradient>
<path d="M1361.4 231.4 L1364.6 238.2 L1372 239.1 L1366.5 244.2 L1368 251.6 L1361.4 247.9 L1354.8 251.6 L1356.3 244.2 L1350.8 239.1 L1358.2 238.2 Z" fill="none" stroke="#3a3944" stroke-width="1.6" stroke-linejoin="round"/>
<path d="M1478.6 234.4 H1492 Q1494.4 234.4 1494.4 236.8 V241 A9.1 8.6 0 0 1 1476.2 241 V236.8 Q1476.2 234.4 1478.6 234.4 Z M1480.6 239.6 L1485.3 244 L1490 239.6" fill="none" stroke="#2b2a33" stroke-width="1.7" stroke-linecap="round" stroke-linejoin="round"/>
<circle cx="1532.3" cy="242.1" r="9" fill="none" stroke="#2b2a33" stroke-width="1.7"/><circle cx="1532.3" cy="239.2" r="3.2" fill="#2b2a33"/><path d="M1526.4 246.2 Q1532.3 242.4 1538.2 246.2 Q1536 250 1532.3 250 Q1528.6 250 1526.4 246.2 Z" fill="#2b2a33"/>
<path d="M1571 251 V245.6 H1573.2 A2.6 2.6 0 0 0 1573.2 240.4 H1571 V236.4 H1575.4 V234.6 A2.6 2.6 0 0 1 1580.6 234.6 V236.4 H1584.4 Q1585.8 236.4 1585.8 237.8 V249.6 Q1585.8 251 1584.4 251 Z" fill="none" stroke="#2b2a33" stroke-width="1.7" stroke-linejoin="round"/>
<path d="M1616.6 236.2 H1631.8 M1616.6 241.8 H1631.8 M1616.6 247.4 H1631.8" stroke="#2b2a33" stroke-width="1.7" stroke-linecap="round"/>
<rect x="339" y="1021.6" width="1316" height="77.4" fill="#000"/>
<text x="347.5" y="1065.4" font-family="DejaVu Sans, Liberation Sans, sans-serif" font-size="15.6" font-weight="700" fill="#fff" text-anchor="start" textLength="122.6" lengthAdjust="spacingAndGlyphs" >Workspace 1</text>
<use href="#ff" x="483.5" y="1024.4" width="68" height="70.4"/>
<text x="556.8" y="1065.4" font-family="DejaVu Sans, Liberation Sans, sans-serif" font-size="15.4" font-weight="400" fill="#fff" text-anchor="start" textLength="484.0" lengthAdjust="spacingAndGlyphs" >Kibo-chan Mascot Mock-up - Google Drawings — Mozilla Firefox</text>
<path d="M1229.8 1033.7 H1251.8 L1270.7 1052.5 V1084.8 Q1270.7 1087.4 1268.1 1087.4 H1229.8 Q1227.2 1087.4 1227.2 1084.8 V1036.3 Q1227.2 1033.7 1229.8 1033.7 Z" fill="#fff" stroke="#4cae3f" stroke-width="2.8" stroke-linejoin="round"/><path d="M1259.4 1032.3 H1272.3 V1045.3 Z" fill="#4cae3f"/><path d="M1235 1054.2 H1260.8 M1235 1059.4 H1260.8 M1235 1064.5 H1260.8 M1235 1069.7 H1260.8 M1235 1074.8 H1260.8 M1235 1080.0 H1260.8 M1235.0 1054.2 V1080 M1243.6 1054.2 V1080 M1252.2 1054.2 V1080 M1260.8 1054.2 V1080 " stroke="#4cae3f" stroke-width="1.5" fill="none" stroke-opacity="0.85"/><rect x="1250.8" y="1067.2" width="12.2" height="13.2" fill="#f3faf1" stroke="#4cae3f" stroke-width="1.5"/><path d="M1254.2 1079 V1073.6 M1257 1079 V1069.8 M1259.8 1079 V1074.8" stroke="#4cae3f" stroke-width="1.9"/>
<rect x="1285.8" y="1042.5" width="49.6" height="40.5" fill="#232323" stroke="#c6c6c6" stroke-width="3.6"/><path d="M1293.6 1052 L1302 1057.3 L1293.6 1062.6" fill="none" stroke="#f2f2f2" stroke-width="2.5"/><rect x="1304" y="1064.2" width="9.2" height="2.3" fill="#f2f2f2"/>
<use href="#ff" x="1345.8" y="1032" width="52.6" height="54.6"/>
<g><path d="M1408.5 1052.7 L1449.7 1042.6 L1460.6 1072.4 L1417 1083.2 Z" fill="#f6f7f8" stroke="#d4d6d8" stroke-width="0.8"/><path d="M1411.6 1054.4 L1448 1045.6 L1457.4 1070.6 L1419.4 1080 Z" fill="#dbe9f6"/><path d="M1413.8 1060.6 L1450.2 1051.6 L1457.4 1070.6 L1419.4 1080 Z" fill="#2d62c4"/><path d="M1426 1061.6 Q1432 1055.4 1438 1058.2 Q1444 1054.2 1452 1056.4 L1453.4 1060.2 Q1440 1060 1428 1066.6 Z" fill="#3c9a3e"/><path d="M1419.4 1073.4 Q1438 1064.4 1456 1066.8 L1457.4 1070.6 L1419.4 1080 Z" fill="#5fa0e6"/><path d="M1450.4 1032.2 L1452.6 1033.4 L1441 1055.6 L1438.6 1054.4 Z" fill="#ecc64e"/><path d="M1438.6 1054.4 L1441 1055.6 L1435.6 1065.2 L1433.6 1064.2 Z" fill="#9a9c9e"/><path d="M1433.6 1064.2 L1435.6 1065.2 L1432.8 1069.4 Z" fill="#444"/><ellipse cx="1421.4" cy="1061.6" rx="9" ry="5.8" fill="#d9dadb"/><ellipse cx="1420.6" cy="1060.4" rx="5.6" ry="3.2" fill="#fbfbfb"/><path d="M1406.2 1070.6 Q1406.2 1066.4 1412 1065.4 H1428 Q1433.6 1066.4 1433.6 1070.6 Q1433.2 1088.4 1420 1088.4 Q1406.6 1088.4 1406.2 1070.6 Z" fill="#e9c24c" stroke="#cfd0d0" stroke-width="1"/><ellipse cx="1419.9" cy="1072" rx="12.2" ry="4.6" fill="#f7dc6e"/><path d="M1409.4 1078.6 Q1420 1083.6 1430.6 1078.6" stroke="#fdf3bf" stroke-width="2" fill="none"/></g>
<clipPath id="pdfc"><rect x="1474" y="1037.4" width="43.2" height="44.4"/></clipPath><path clip-path="url(#pdfc)" d="M1475.6 1033.4 L1515.8 1085.6 M1515.8 1033.4 L1475.6 1085.6" stroke="#e23020" stroke-width="6.8"/>
<text x="1480.8" y="1067.4" font-family="Liberation Sans, sans-serif" font-size="23.0" font-weight="400" fill="#fff" text-anchor="start" textLength="31.0" lengthAdjust="spacingAndGlyphs" >pdf</text>
<path d="M1558 1035 H1535 Q1532.2 1035 1532.2 1037.8 V1083.2 Q1532.2 1086 1535 1086 H1568 Q1570.8 1086 1570.8 1083.2 V1064" fill="none" stroke="#3a3b3c" stroke-width="5.2" stroke-linejoin="round"/><path d="M1546 1071.4 L1548.4 1062.4 L1578 1036.6 Q1581 1034.4 1583.6 1037 Q1586.4 1039.8 1584 1042.6 L1555 1069 Z" fill="#3a3b3c"/>
<rect x="1594.6" y="1036.1" width="48.8" height="48.8" rx="5.4" fill="#050b14" stroke="#4b7bc0" stroke-width="4"/><rect x="1601.6" y="1042.2" width="35" height="8.8" rx="1.4" fill="none" stroke="#4b7bc0" stroke-width="2.4"/><g fill="none" stroke="#4b7bc0" stroke-width="1.9"><rect x="1602.5" y="1057.6" width="5" height="4.8" rx="1.2"/><rect x="1611.8" y="1057.6" width="5" height="4.8" rx="1.2"/><rect x="1621.2" y="1057.6" width="5" height="4.8" rx="1.2"/><rect x="1630.7" y="1057.6" width="5" height="4.8" rx="1.2"/><rect x="1602.5" y="1066.6" width="5" height="4.8" rx="1.2"/><rect x="1611.8" y="1066.6" width="5" height="4.8" rx="1.2"/><rect x="1621.2" y="1066.6" width="5" height="4.8" rx="1.2"/><rect x="1602.5" y="1075.4" width="5" height="4.8" rx="1.2"/><rect x="1611.8" y="1075.4" width="5" height="4.8" rx="1.2"/><rect x="1621.2" y="1075.4" width="5" height="4.8" rx="1.2"/><rect x="1630.7" y="1066.6" width="5" height="13.6" rx="1.2"/></g>
<circle cx="1373.7" cy="201.4" r="29.2" fill="#555" fill-opacity="0.1"/>
<circle cx="1373.7" cy="201" r="27.8" fill="#fff" fill-opacity="0.45"/>
<path d="M1374.3 186.4 L1383 196.8 L1374.3 196.8 Z" fill="#0a0a0a"/>
<path d="M1366.8 189.8 C1366.8 186.4 1371.8 186.4 1371.8 189.8 L1372.2 197.6 C1373.4 195.8 1376.4 196 1376.9 198.2 C1378.2 196.6 1381.2 197 1381.7 199.2 C1383.2 198 1386.6 198.6 1387.3 200.8 C1388.7 204.8 1388.2 209.4 1383.8 214.9 L1371.6 215.3 C1369 210.4 1365 205.6 1362 202.8 C1360.4 201 1362.6 198.4 1364.8 199.9 L1367.2 202.4 Z" fill="#fff" stroke="#0a0a0a" stroke-width="1.6" stroke-linejoin="round"/>
<path d="M1374.8 203.4 V209.4 M1378 203.4 V209.4 M1381.6 203.4 V209.4" stroke="#0a0a0a" stroke-width="1.3"/>
</svg>
<div class="b" style="left:1305.0px;top:108.7px;width:136.8px;height:59.3px;background:#fdfdf7;border:1px solid #c9dbb0;border-radius:11px"></div>
<span id="t22" class="t" style="left:1320.6px;top:124.8px;font:700 20.0px/24px 'Liberation Sans', sans-serif;color:#2f3847;transform:scaleX(0.9780);-webkit-text-stroke:0.35px #2f3847;">Screenshot</span>
</main>
<footer>
<div class="b" style="left:15.0px;top:1114.2px;width:1503.5px;height:6.8px;background:#b8cd9b"></div>
<div class="b" style="left:14.4px;top:1107.0px;width:2.0px;height:21.0px;background:#90b166"></div>
<div class="b" style="left:56.4px;top:1107.0px;width:1.6px;height:21.0px;background:#90b166"></div>
<div class="b" style="left:97.9px;top:1107.0px;width:1.6px;height:21.0px;background:#90b166"></div>
<div class="b" style="left:139.4px;top:1107.0px;width:1.6px;height:21.0px;background:#90b166"></div>
<div class="b" style="left:181.4px;top:1107.0px;width:1.6px;height:21.0px;background:#90b166"></div>
<div class="b" style="left:223.4px;top:1107.0px;width:1.6px;height:21.0px;background:#90b166"></div>
<div class="b" style="left:264.9px;top:1107.0px;width:1.6px;height:21.0px;background:#90b166"></div>
<div class="b" style="left:306.4px;top:1107.0px;width:1.6px;height:21.0px;background:#90b166"></div>
<div class="b" style="left:348.4px;top:1107.0px;width:1.6px;height:21.0px;background:#90b166"></div>
<div class="b" style="left:390.4px;top:1107.0px;width:1.6px;height:21.0px;background:#90b166"></div>
<div class="b" style="left:431.9px;top:1107.0px;width:1.6px;height:21.0px;background:#90b166"></div>
<div class="b" style="left:473.4px;top:1107.0px;width:1.6px;height:21.0px;background:#90b166"></div>
<div class="b" style="left:515.4px;top:1107.0px;width:1.6px;height:21.0px;background:#90b166"></div>
<div class="b" style="left:557.4px;top:1107.0px;width:1.6px;height:21.0px;background:#90b166"></div>
<div class="b" style="left:598.9px;top:1107.0px;width:1.6px;height:21.0px;background:#90b166"></div>
<div class="b" style="left:640.4px;top:1107.0px;width:1.6px;height:21.0px;background:#90b166"></div>
<div class="b" style="left:682.4px;top:1107.0px;width:1.6px;height:21.0px;background:#90b166"></div>
<div class="b" style="left:724.4px;top:1107.0px;width:1.6px;height:21.0px;background:#90b166"></div>
<div class="b" style="left:765.9px;top:1107.0px;width:1.6px;height:21.0px;background:#90b166"></div>
<div class="b" style="left:807.4px;top:1107.0px;width:1.6px;height:21.0px;background:#90b166"></div>
<div class="b" style="left:849.4px;top:1107.0px;width:1.6px;height:21.0px;background:#90b166"></div>
<div class="b" style="left:891.4px;top:1107.0px;width:1.6px;height:21.0px;background:#90b166"></div>
<div class="b" style="left:932.9px;top:1107.0px;width:1.6px;height:21.0px;background:#90b166"></div>
<div class="b" style="left:974.4px;top:1107.0px;width:1.6px;height:21.0px;background:#90b166"></div>
<div class="b" style="left:1016.4px;top:1107.0px;width:1.6px;height:21.0px;background:#90b166"></div>
<div class="b" style="left:1058.4px;top:1107.0px;width:1.6px;height:21.0px;background:#90b166"></div>
<div class="b" style="left:1099.9px;top:1107.0px;width:1.6px;height:21.0px;background:#90b166"></div>
<div class="b" style="left:1141.4px;top:1107.0px;width:1.6px;height:21.0px;background:#90b166"></div>
<div class="b" style="left:1183.4px;top:1107.0px;width:1.6px;height:21.0px;background:#90b166"></div>
<div class="b" style="left:1225.4px;top:1107.0px;width:1.6px;height:21.0px;background:#90b166"></div>
<div class="b" style="left:1266.9px;top:1107.0px;width:1.6px;height:21.0px;background:#90b166"></div>
<div class="b" style="left:1308.4px;top:1107.0px;width:1.6px;height:21.0px;background:#90b166"></div>
<div class="b" style="left:1350.4px;top:1107.0px;width:1.6px;height:21.0px;background:#90b166"></div>
<div class="b" style="left:1392.4px;top:1107.0px;width:1.6px;height:21.0px;background:#90b166"></div>
<div class="b" style="left:1433.9px;top:1107.0px;width:1.6px;height:21.0px;background:#90b166"></div>
<div class="b" style="left:1475.4px;top:1107.0px;width:1.6px;height:21.0px;background:#90b166"></div>
<div class="b" style="left:1517.4px;top:1107.0px;width:2.0px;height:21.0px;background:#90b166"></div>
<div class="b" style="left:1462.7px;top:1105.0px;width:28.6px;height:28.6px;background:#6c8a48;border-radius:50%;box-shadow:0 2px 5px rgba(0,0,0,.22)"></div>
<span id="t23" class="t" style="left:1578.3px;top:1103.0px;font:400 22.4px/27px 'Liberation Sans', sans-serif;color:#353e4e;transform:scaleX(0.9870);-webkit-text-stroke:0.7px #353e4e;">Go Live</span>
</footer>
</div></body></html>
